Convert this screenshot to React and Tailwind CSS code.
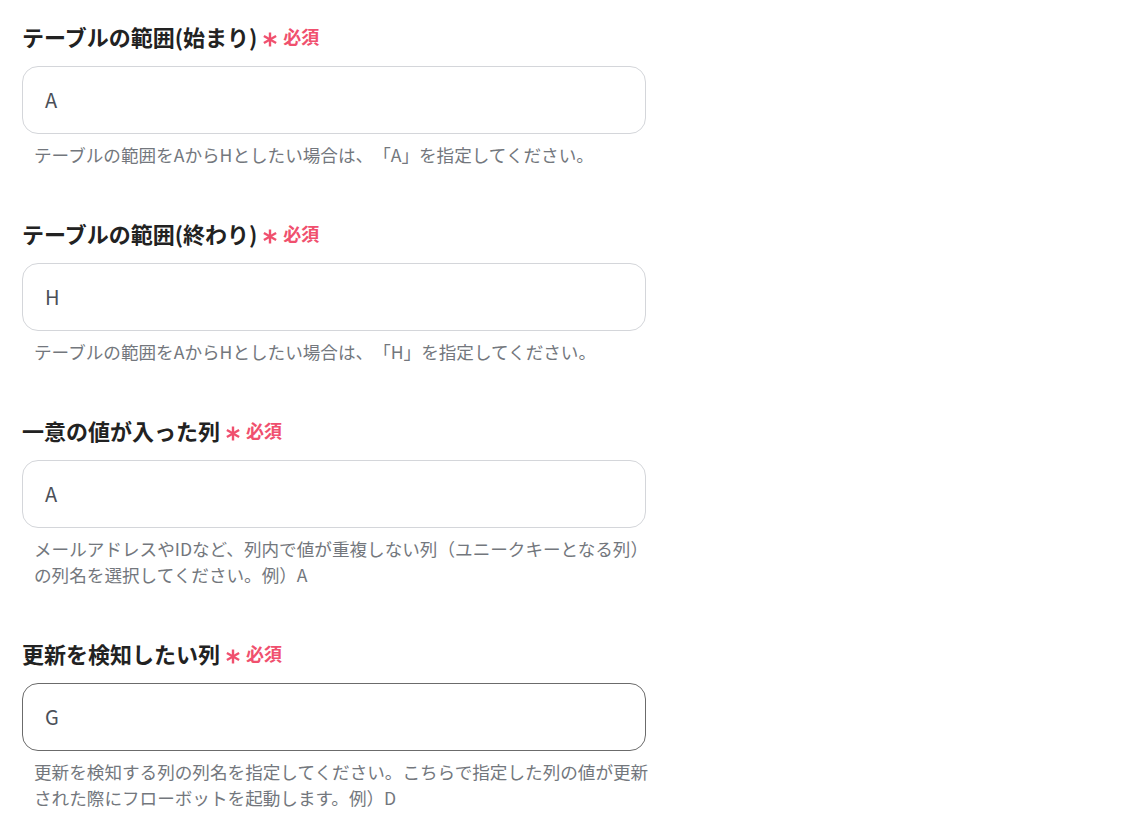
const fields = [
  {
    label: "テーブルの範囲(始まり)",
    value: "A",
    help: ["テーブルの範囲をAからHとしたい場合は、「A」を指定してください。"],
  },
  {
    label: "テーブルの範囲(終わり)",
    value: "H",
    help: ["テーブルの範囲をAからHとしたい場合は、「H」を指定してください。"],
  },
  {
    label: "一意の値が入った列",
    value: "A",
    help: [
      "メールアドレスやIDなど、列内で値が重複しない列（ユニークキーとなる列）",
      "の列名を選択してください。例）A",
    ],
  },
  {
    label: "更新を検知したい列",
    value: "G",
    focused: true,
    help: [
      "更新を検知する列の列名を指定してください。こちらで指定した列の値が更新",
      "された際にフローボットを起動します。例）D",
    ],
  },
];

const Asterisk = () => (
  <svg width="14" height="15" viewBox="0 0 14 15" className="ml-[6px] mt-[7px]" aria-hidden="true">
    <g stroke="#f0506e" strokeWidth="2.4" strokeLinecap="butt">
      <line x1="7" y1="0.5" x2="7" y2="14.5" />
      <line x1="0.9" y1="4" x2="13.1" y2="11" />
      <line x1="0.9" y1="11" x2="13.1" y2="4" />
    </g>
  </svg>
);

const Field = ({ label, value, help, focused }) => (
  <div className="flex flex-col">
    <div className="flex items-center h-[32px]">
      <span className="text-[22px] font-bold text-[#222] leading-[32px]">{label}</span>
      <Asterisk />
      <span className="ml-[6px] text-[18px] font-bold text-[#f0506e] leading-none">必須</span>
    </div>
    <div
      className={`mt-[14px] h-[68px] rounded-[16px] border flex items-center px-[22px] text-[20px] text-[#4b5058] ${
        focused ? "border-[#6b6b6b]" : "border-[#d4d6da]"
      }`}
    >
      {value}
    </div>
    <div className="mt-[8px] pl-[12px] text-[17.6px] leading-[26px] text-[#73777d] [text-spacing-trim:space-all]">
      {help.map((line, i) => (
        <div key={i} className="whitespace-nowrap">{line}</div>
      ))}
    </div>
  </div>
);

export default function App() {
  return (
    <div
      className="min-h-screen bg-white pt-[20px] pl-[22px]"
      style={{ fontFamily: '"Noto Sans CJK JP", "Noto Sans", sans-serif' }}
    >
      <div className="w-[624px] flex flex-col gap-[49px]">
        {fields.map((f, i) => (
          <Field key={i} {...f} />
        ))}
      </div>
    </div>
  );
}
